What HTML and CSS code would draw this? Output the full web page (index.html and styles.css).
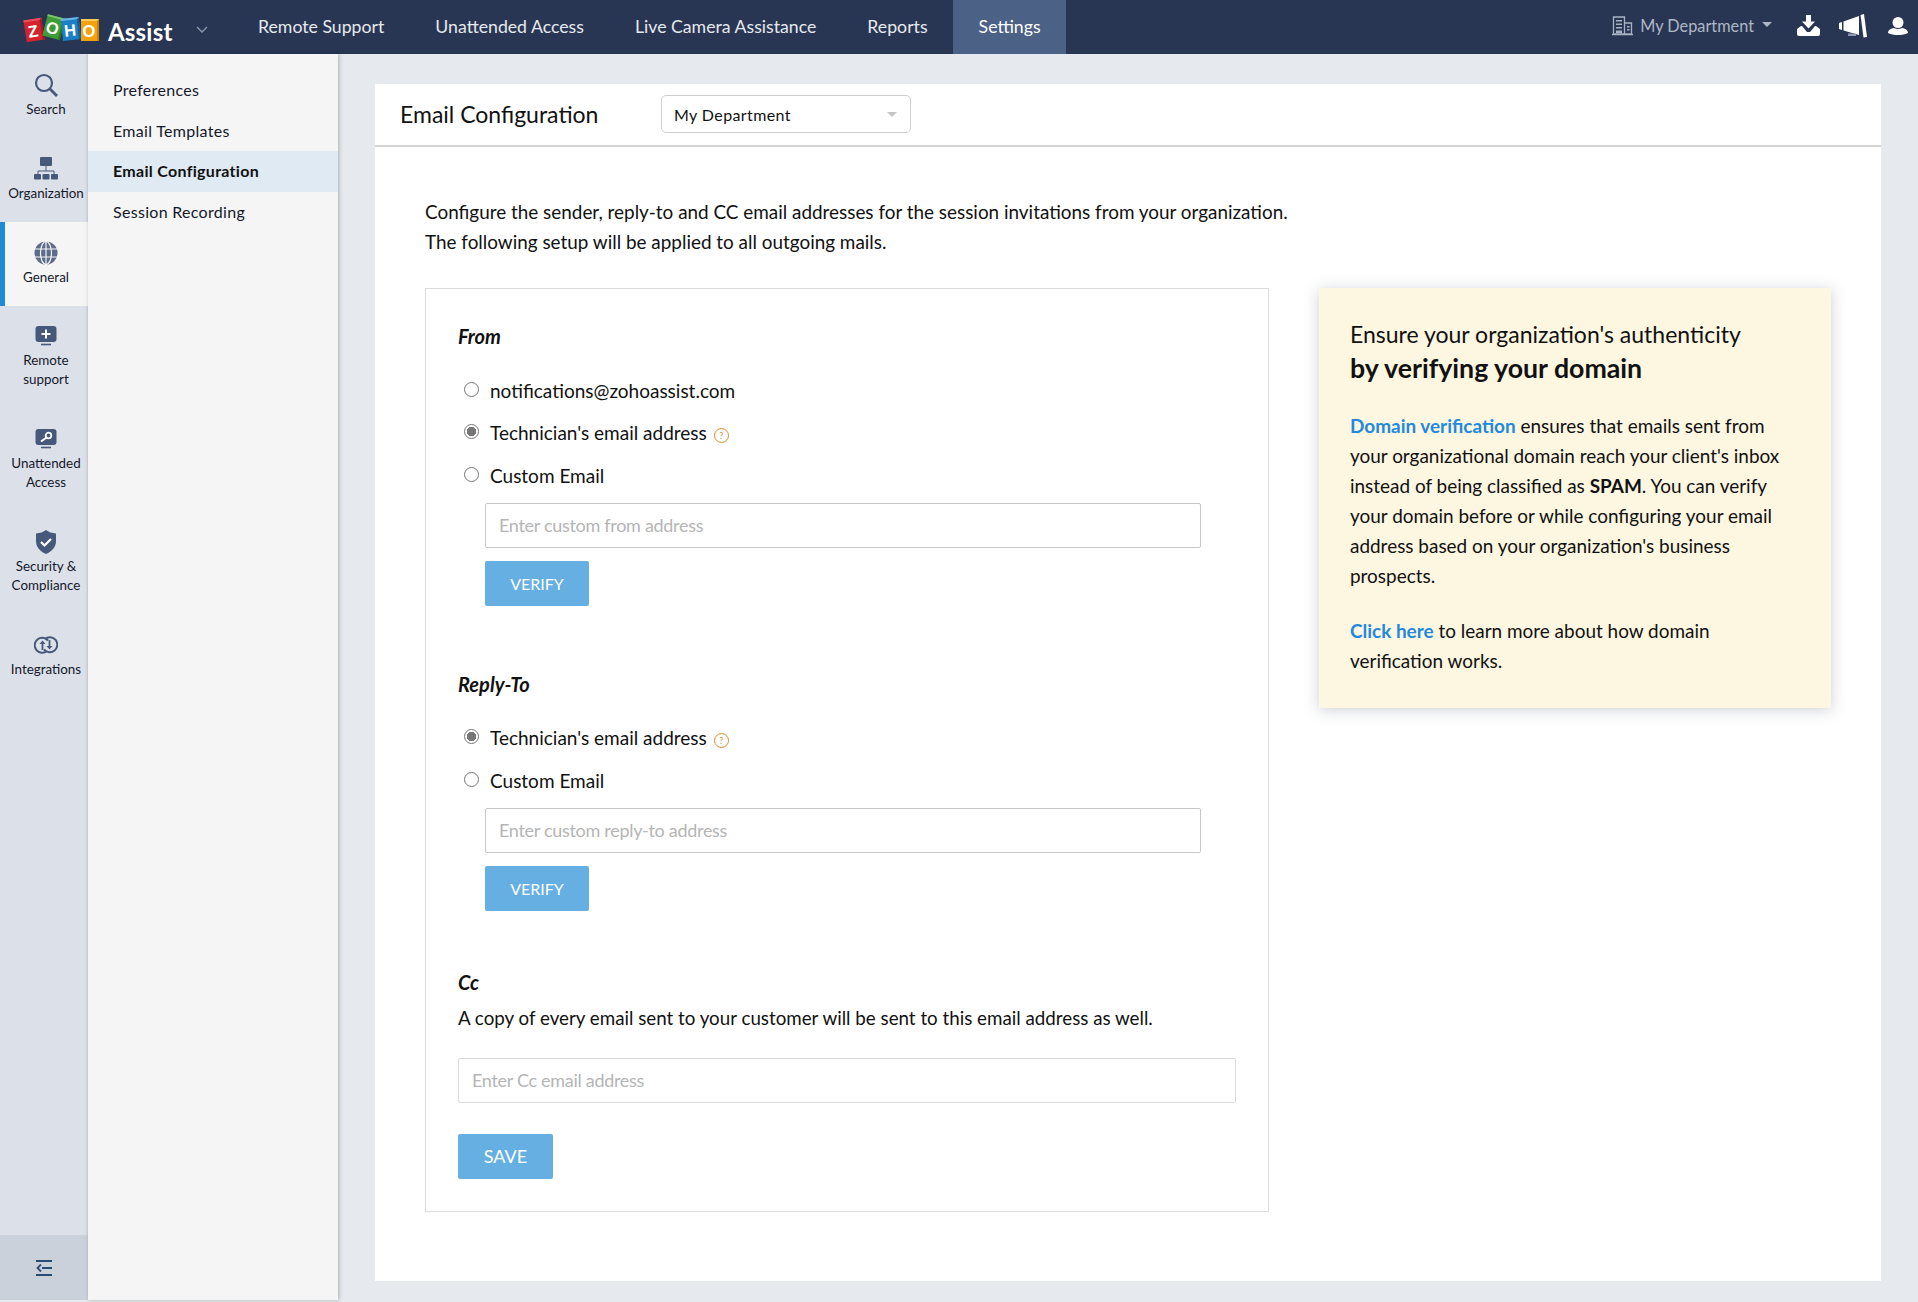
FILE: index.html
```html
<!DOCTYPE html>
<html lang="en">
<head>
<meta charset="utf-8">
<title>Zoho Assist - Email Configuration</title>
<link rel="stylesheet" href="styles.css">
</head>
<body>
<header class="topbar">
  <div class="brand">
    <div class="logo">
      <span class="tile tile-z">Z</span><span class="tile tile-o1">O</span><span class="tile tile-h">H</span><span class="tile tile-o2">O</span>
    </div>
    <span class="brand-name">Assist</span>
    <svg class="brand-caret" viewBox="0 0 12 7" width="12" height="7"><path d="M1 1l5 5 5-5" fill="none" stroke="#8d99ae" stroke-width="1.3"/></svg>
  </div>
  <nav class="mainnav">
    <a class="navlink">Remote Support</a>
    <a class="navlink">Unattended Access</a>
    <a class="navlink">Live Camera Assistance</a>
    <a class="navlink">Reports</a>
    <a class="navlink active">Settings</a>
  </nav>
  <div class="topright">
    <svg class="dept-icon" viewBox="0 0 21 20" width="21" height="20"><path d="M1.5 1h11v17h-11zM12.5 7h7v11h-7zM0 18.5h21" fill="none" stroke="#a9b2c2" stroke-width="1.3"/><path d="M4 4h6v1.6H4zM4 7.5h6v1.6H4zM4 11h6v1.6H4zM4 14.5h6V17H4zM15 10h2.500v1.400H15zM15 13h2.500v1.400H15z" fill="#a9b2c2"/></svg>
    <span class="dept-name">My Department</span>
    <span class="dept-caret"></span>
    <svg class="tool-icon" viewBox="0 0 23 21" width="23" height="21"><path d="M9 0h5v6.500h4l-6.500 7-6.500-7h4z" fill="#fff"/><path d="M0 14l4-3h1l5 6h3l5-6h1l4 3v5a2 2 0 0 1-2 2H2a2 2 0 0 1-2-2z" fill="#fff"/></svg>
    <svg class="tool-icon mega" viewBox="0 0 28 24" width="28" height="24"><path d="M0 9l3-1v8l-3-1zM4.500 7.500L20 2v19L4.500 16.500z" fill="#fff"/><path d="M21.500 1L25 0l3 23-3.500.5z" fill="#fff"/><path d="M9 19.500h8V22H9z" fill="#8d99ae"/></svg>
    <svg class="tool-icon" viewBox="0 0 20 18" width="20" height="18"><ellipse cx="10" cy="5.500" rx="5.500" ry="5.500" fill="#fff"/><path d="M0 16c0-3 3-4.500 6-5 2.200 1.300 5.800 1.300 8 0 3 .5 6 2 6 5-3 1.500-6 2-10 2s-7-.5-10-2z" fill="#fff"/></svg>
  </div>
</header>

<div class="workspace">
  <aside class="rail">
    <a class="rail-item">
      <i class="rail-icon"><svg viewBox="0 0 24 24" width="24" height="24"><circle cx="10" cy="10" r="8" fill="none" stroke="#46597a" stroke-width="2.200"/><path d="M16 16l7 7" stroke="#46597a" stroke-width="2.800"/></svg></i>
      <span>Search</span>
    </a>
    <a class="rail-item">
      <i class="rail-icon"><svg viewBox="0 0 24 24" width="24" height="24"><rect x="6" y="0" width="12" height="9" rx="1" fill="#46597a"/><path d="M12 9v5M4 17v-3h16v3" fill="none" stroke="#46597a" stroke-width="1"/><rect x="0" y="17" width="7" height="5.500" rx="1" fill="#46597a"/><rect x="8.500" y="17" width="7" height="5.500" rx="1" fill="#46597a"/><rect x="17" y="17" width="7" height="5.500" rx="1" fill="#46597a"/></svg></i>
      <span>Organization</span>
    </a>
    <a class="rail-item selected">
      <i class="rail-icon"><svg viewBox="0 0 24 24" width="24" height="24"><circle cx="12" cy="12" r="11.500" fill="#5c6c8a"/><g fill="none" stroke="#f5f5f5" stroke-width="1.200"><ellipse cx="12" cy="12" rx="5.500" ry="11.500"/><path d="M12 0v24M0 8h24M0 16h24"/></g></svg></i>
      <span>General</span>
    </a>
    <a class="rail-item tall">
      <i class="rail-icon"><svg viewBox="0 0 22 20" width="22" height="20"><rect x="0.500" y="0" width="21" height="16" rx="3" fill="#46597a"/><path d="M6 18.500h10" stroke="#46597a" stroke-width="1.600"/><path d="M11 3.500v9M6.500 8h9" stroke="#fff" stroke-width="2"/></svg></i>
      <span>Remote<br>support</span>
    </a>
    <a class="rail-item tall">
      <i class="rail-icon"><svg viewBox="0 0 22 20" width="22" height="20"><rect x="0.500" y="0" width="21" height="16" rx="3" fill="#46597a"/><path d="M6 18.500h10" stroke="#46597a" stroke-width="1.600"/><circle cx="13.500" cy="6.500" r="2.800" fill="none" stroke="#fff" stroke-width="1.800"/><path d="M11.500 8.500L6 12.500" stroke="#fff" stroke-width="2"/></svg></i>
      <span>Unattended<br>Access</span>
    </a>
    <a class="rail-item tall">
      <i class="rail-icon"><svg viewBox="0 0 22 24" width="22" height="24"><path d="M11 0c2.500 2 6 3.200 10 3.500V11c0 6-4 10.500-10 13C5 21.500 1 17 1 11V3.500C5 3.200 8.500 2 11 0z" fill="#46597a"/><path d="M6 12l3.500 3.500L16 9" fill="none" stroke="#fff" stroke-width="2.200"/></svg></i>
      <span>Security &amp;<br>Compliance</span>
    </a>
    <a class="rail-item raised">
      <i class="rail-icon"><svg viewBox="0 0 24 18" width="24" height="18"><g fill="none" stroke="#46597a" stroke-width="2"><path d="M14 4.500A7.500 7.500 0 1 0 13 15"/><path d="M10 13.500A7.500 7.500 0 1 0 11 3"/><path d="M8.500 14V7M15.500 4v7" stroke-width="1.800"/></g><path d="M5.500 8l3-3.500 3 3.500zM12.500 10l3 3.500 3-3.500z" fill="#46597a"/></svg></i>
      <span>Integrations</span>
    </a>
    <button class="rail-collapse" type="button" aria-label="Collapse">
      <svg viewBox="0 0 16 16" width="16" height="16"><path d="M0 1h16M0 15h16M6 8h10" stroke="#2b4c70" stroke-width="2"/><path d="M5 4.500L1.500 8 5 11.500" fill="none" stroke="#2b4c70" stroke-width="1.800"/></svg>
    </button>
  </aside>

  <aside class="subnav">
    <a class="subnav-item">Preferences</a>
    <a class="subnav-item">Email Templates</a>
    <a class="subnav-item current">Email Configuration</a>
    <a class="subnav-item">Session Recording</a>
  </aside>

  <main class="content">
    <section class="card">
      <header class="card-head">
        <h1 class="card-title">Email Configuration</h1>
        <div class="select"><span>My Department</span><i class="select-caret"></i></div>
      </header>
      <div class="card-body">
        <p class="intro">Configure the sender, reply-to and CC email addresses for the session invitations from your organization.<br>The following setup will be applied to all outgoing mails.</p>
        <div class="columns">
          <form class="formbox">
            <h2 class="legend legend-from">From</h2>
            <label class="radio-row"><i class="radio"></i>notifications@zohoassist.com</label>
            <label class="radio-row"><i class="radio on"></i>Technician's email address<i class="help">?</i></label>
            <label class="radio-row"><i class="radio"></i>Custom Email</label>
            <div class="indent">
              <div class="field">Enter custom from address</div>
              <button class="btn btn-verify" type="button">VERIFY</button>
            </div>
            <h2 class="legend legend-reply">Reply-To</h2>
            <label class="radio-row"><i class="radio on"></i>Technician's email address<i class="help">?</i></label>
            <label class="radio-row"><i class="radio"></i>Custom Email</label>
            <div class="indent">
              <div class="field">Enter custom reply-to address</div>
              <button class="btn btn-verify" type="button">VERIFY</button>
            </div>
            <h2 class="legend legend-cc">Cc</h2>
            <p class="cc-note">A copy of every email sent to your customer will be sent to this email address as well.</p>
            <div class="field field-cc">Enter Cc email address</div>
            <button class="btn btn-save" type="button">SAVE</button>
          </form>
          <aside class="notice">
            <h3 class="notice-title">Ensure your organization's authenticity<br><strong>by verifying your domain</strong></h3>
            <p class="notice-text"><a class="link">Domain verification</a> ensures that emails sent from your organizational domain reach your client's inbox instead of being classified as <b class="spam">SPAM</b>. You can verify your domain before or while configuring your email address based on your organization's business prospects.</p>
            <p class="notice-text"><a class="link">Click here</a> to learn more about how domain verification works.</p>
          </aside>
        </div>
      </div>
    </section>
  </main>
</div>
</body>
</html>
```
FILE: styles.css
```css
* { box-sizing: border-box; }
html, body { margin: 0; height: 100%; }
body { width: 1918px; height: 1302px; overflow: hidden; background: #e6eaef; font-family: Lato, "Noto Sans", sans-serif; color: #111; }
a { color: inherit; text-decoration: none; }
h1, h2, h3, p { margin: 0; font-weight: 400; }

.topbar { height: 54px; background: #283654; display: flex; align-items: stretch; }
.brand { width: 232.500px; flex: none; display: flex; align-items: center; padding-left: 25px; }
.logo { display: flex; align-items: center; margin-top: 6px; }
.tile { width: 18px; height: 22px; display: flex; align-items: center; justify-content: center; color: #fff; font: 700 16.500px/1 "Liberation Sans", Arial, sans-serif; }
.tile-z { background: #d3232e; border-top: 2px solid #e8525c; border-right: 2px solid #a81a24; transform: rotate(-9deg); }
.tile-o1 { background: #3f9c35; border-top: 2px solid #7cc26f; border-right: 2px solid #2a7a25; transform: rotate(15deg) translateY(-3px); margin-left: 1px; }
.tile-h { background: #1a7fc4; border-top: 2px solid #6cb6e6; border-right: 2px solid #125f9a; transform: rotate(-6deg) translateY(-1px); }
.tile-o2 { background: #f2a20f; border-top: 2px solid #f8cb5e; border-right: 2px solid #c98408; margin-left: 1px; }
.brand-name { font-size: 24px; font-weight: 700; color: #fff; margin-left: 9px; letter-spacing: .2px; margin-top: 8px; }
.brand-caret { margin-left: 23px; margin-top: 5px; }

.mainnav { display: flex; align-items: stretch; }
.navlink { display: flex; align-items: center; padding: 0 25.500px 2px; font-size: 17.700px; color: #e6e9ee; }
.navlink.active { background: #4b6186; color: #fff; }

.topright { margin-left: auto; display: flex; align-items: center; padding: 0 10px 3px 0; }
.dept-icon { margin-right: 7px; }
.dept-name { font-size: 16.300px; color: #aeb6c5; }
.dept-caret { width: 0; height: 0; border: 5px solid transparent; border-top-color: #aeb6c5; border-bottom: 0; margin: 0 25px 2px 8px; }
.tool-icon { display: block; margin-right: 19px; }
.tool-icon:last-child { margin-right: 0; }
.tool-icon.mega { margin-right: 21px; }

.workspace { display: flex; height: 1248px; }
.rail { width: 88px; flex: none; height: 1246px; background: #dce0e9; display: flex; flex-direction: column; box-shadow: inset -2px 0 2px -1px #d0d4dd; }
.rail-item { height: 84px; display: flex; flex-direction: column; align-items: center; padding: 19px 0 0 4px; font-size: 13.400px; line-height: 19px; text-align: center; color: #14182a; }
.rail-icon { flex: none; height: 24px; margin-bottom: 3px; display: flex; align-items: center; justify-content: center; }
.rail-icon svg { display: block; }
.rail-item.tall { height: 103px; padding-top: 18px; }
.rail-item.raised { padding-top: 18px; }
.rail-item.selected { background: #f5f5f5; border-left: 5px solid #1f8bd8; padding: 19px 1px 0 0; }
.rail-collapse { margin-top: auto; height: 65px; width: 88px; border: 0; background: #cad1db; display: flex; align-items: center; justify-content: center; padding: 0; }

.subnav { width: 250px; flex: none; height: 1246px; background: #f5f5f5; box-shadow: 1px 0 4px rgba(0,0,0,.25); padding-top: 16px; position: relative; }
.subnav-item { display: flex; align-items: center; height: 40.500px; padding: 0 0 1px 25px; font-size: 16px; letter-spacing: .3px; color: #14182a; }
.subnav-item.current { background: #e0eaf3; font-weight: 700; color: #111; }

.content { flex: 1; min-width: 0; padding: 30px 37px 0 37px; }
.card { background: #fff; height: 1197px; }
.card-head { height: 63px; border-bottom: 2px solid #d5d5d5; display: flex; align-items: center; padding: 0 0 1px 25px; }
.card-title { font-size: 23px; width: 261px; color: #111; }
.select { width: 250px; height: 38px; border: 1px solid #cfcfcf; border-radius: 5px; display: flex; align-items: center; justify-content: space-between; padding: 0 13px 0 12px; font-size: 16px; letter-spacing: .4px; }
.select-caret { width: 0; height: 0; border: 5px solid transparent; border-top-color: #c4c4c4; border-bottom: 0; margin-right: 0; }

.card-body { padding: 50px 48px 0 50px; }
.intro { font-size: 18.900px; line-height: 30px; color: #111; }
.columns { display: flex; align-items: flex-start; gap: 50px; margin-top: 31px; }
.formbox { width: 844px; height: 924px; flex: none; border: 1px solid #dcdcdc; padding: 0 32px; }
.legend { font-size: 20px; font-style: italic; font-weight: 700; color: #111; }
.legend-from { margin-top: 35px; margin-bottom: 21px; line-height: 24px; }
.legend-reply { margin-top: 66px; margin-bottom: 21px; line-height: 24px; }
.legend-cc { margin-top: 59px; line-height: 24px; }
.radio-row { display: flex; align-items: center; height: 42.500px; font-size: 19px; color: #111; }
.radio { width: 15px; height: 15px; border-radius: 50%; border: 1px solid #767676; background: #fff; margin: -2px 11px 0 6px; flex: none; }
.radio.on { border-color: #777; background: radial-gradient(circle, #767676 0 4.500px, #fff 5px); }
.help { width: 15px; height: 15px; border-radius: 50%; border: 1px solid #e08a2e; color: #e08a2e; font: 400 9px/13px Lato, sans-serif; text-align: center; margin: 6px 0 0 7px; }
.indent { padding-left: 27px; }
.field { height: 45px; border: 1px solid #c8c8c8; border-radius: 2px; padding: 0 13px; display: flex; align-items: center; font-size: 18px; letter-spacing: -.3px; color: #b5b5b5; width: 716px; margin-top: 6px; }
.btn { display: block; border: 0; border-radius: 2px; background: #65afe3; color: #fff; font-family: inherit; padding: 0; }
.btn-verify { width: 104px; height: 45px; font-size: 16px; margin-top: 13px; }
.cc-note { font-size: 18.750px; line-height: 24px; margin-top: 12px; color: #111; }
.field-cc { width: 778px; margin-top: 28px; border-color: #dcdcdc; }
.btn-save { width: 95px; height: 45px; font-size: 18px; margin-top: 31px; }

.notice { width: 512px; height: 420px; flex: none; background: #fdf6e0; box-shadow: 0 2px 14px rgba(60,70,90,.25); padding: 29px 39px 0 31px; }
.notice-title { font-size: 23px; line-height: 34px; color: #111; }
.notice-title strong { font-weight: 700; font-size: 26.700px; }
.notice-text { font-size: 18.950px; line-height: 30px; color: #111; }
.notice-text + .notice-text { margin-top: 25px; }
.notice-title + .notice-text { margin-top: 25px; }
.link { color: #2389dc; font-weight: 700; }
.spam { font-weight: 700; color: #111; }
```
